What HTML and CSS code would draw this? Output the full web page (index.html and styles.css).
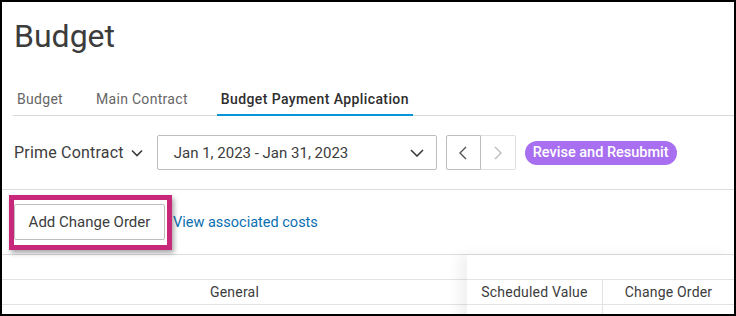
FILE: index.html
```html
<!DOCTYPE html>
<html lang="en">
<head>
    <meta charset="UTF-8">
    <title>Budget</title>
    <link rel="stylesheet" href="styles.css">
</head>
<body>
    <div class="frame">
        <h1 class="title">Budget</h1>

        <div class="tabs">
            <div class="tab">Budget</div>
            <div class="tab">Main Contract</div>
            <div class="tab active">Budget Payment Application</div>
        </div>

        <div class="toolbar">
            <div class="contract-select">
                Prime Contract
                <svg width="12" height="8" viewBox="0 0 12 8"><path d="M1 1.5l5 5 5-5" fill="none" stroke="#3c3c3c" stroke-width="1.6"/></svg>
            </div>
            <div class="period-select">
                <span>Jan 1, 2023 - Jan 31, 2023</span>
                <svg width="14" height="8" viewBox="0 0 14 8"><path d="M1 1l6 6 6-6" fill="none" stroke="#3c3c3c" stroke-width="1.6"/></svg>
            </div>
            <div class="pager">
                <button class="pager-btn">
                    <svg width="8" height="14" viewBox="0 0 8 14"><path d="M7 1L1 7l6 6" fill="none" stroke="#555" stroke-width="1.4"/></svg>
                </button>
                <button class="pager-btn disabled">
                    <svg width="8" height="14" viewBox="0 0 8 14"><path d="M1 1l6 6-6 6" fill="none" stroke="#bbb" stroke-width="1.4"/></svg>
                </button>
            </div>
            <span class="status-pill">Revise and Resubmit</span>
        </div>

        <div class="actions">
            <div class="highlight-wrap">
                <button class="btn-secondary">Add Change Order</button>
                <div class="highlight"></div>
            </div>
            <a class="link" href="#">View associated costs</a>
        </div>

        <div class="grid">
            <div class="grid-pinned">
                <div class="grid-row group-row"></div>
                <div class="grid-row head-row">
                    <div class="cell center">General</div>
                </div>
                <div class="grid-row"></div>
            </div>
            <div class="grid-scroll">
                <div class="grid-row group-row"></div>
                <div class="grid-row head-row">
                    <div class="cell col-sv">Scheduled Value</div>
                    <div class="cell col-co">Change Order</div>
                </div>
                <div class="grid-row">
                    <div class="cell col-sv"></div>
                    <div class="cell col-co"></div>
                </div>
            </div>
        </div>
    </div>
</body>
</html>
```

FILE: styles.css
```css
* {
    box-sizing: border-box;
}
body {
    margin: 0;
    font-family: Roboto, "Noto Sans", sans-serif;
    color: #3c3c3c;
    background: #000;
}
.frame {
    width: 736px;
    height: 316px;
    border: 2px solid #000;
    background: white;
    overflow: hidden;
}
.title {
    margin: 0;
    padding: 14px 0 0 12px;
    font-size: 32px;
    font-weight: 400;
    line-height: 40px;
    color: #3c3c3c;
}
.tabs {
    display: flex;
    gap: 25px;
    margin: 29px 0 0 11px;
    border-bottom: 1px solid #d9d9d9;
    height: 31px;
}
.tab {
    padding: 0 4px;
    font-size: 14px;
    line-height: 28px;
    letter-spacing: 0.3px;
    color: #666;
    border-bottom: 2px solid transparent;
    margin-bottom: -1px;
}
.tab.active {
    color: #2e2e2e;
    font-weight: 500;
    letter-spacing: 0.4px;
    border-bottom-color: #0696d7;
}
.toolbar {
    display: flex;
    align-items: center;
    height: 74px;
    padding: 0 0 0 12px;
    border-bottom: 1px solid #dcdcdc;
}
.contract-select {
    display: flex;
    align-items: center;
    gap: 7px;
    font-size: 16px;
    letter-spacing: 0.2px;
    color: #3c3c3c;
    margin-right: 14px;
}
.period-select {
    display: flex;
    align-items: center;
    justify-content: space-between;
    width: 280px;
    height: 35px;
    padding: 0 12px 0 16px;
    border: 1px solid #bdbdbd;
    border-radius: 2px;
    font-size: 15px;
    color: #3c3c3c;
    margin-right: 9px;
}
.pager {
    display: flex;
    height: 35px;
    margin-right: 9px;
}
.pager-btn {
    width: 35px;
    height: 35px;
    background: white;
    border: 1px solid #bdbdbd;
    border-radius: 2px 0 0 2px;
    display: flex;
    align-items: center;
    justify-content: center;
    padding: 0;
}
.pager-btn.disabled {
    border-color: #e0e0e0;
    border-left: none;
    border-radius: 0 2px 2px 0;
}
.status-pill {
    background: #a86ff0;
    color: white;
    font-size: 14.5px;
    font-weight: 500;
    line-height: 24px;
    padding: 0 8px;
    border-radius: 12px;
}
.actions {
    display: flex;
    align-items: center;
    height: 65px;
    padding: 0 0 0 12px;
    border-bottom: 1px solid #dcdcdc;
}
.highlight-wrap {
    position: relative;
}
.btn-secondary {
    height: 36px;
    width: 151px;
    background: white;
    border: 1px solid #bdbdbd;
    border-radius: 2px;
    font-family: inherit;
    font-size: 15px;
    color: #3c3c3c;
    padding: 0;
}
.highlight {
    position: absolute;
    left: -5px;
    top: -9px;
    width: 163px;
    height: 55px;
    border: 5px solid #c8287a;
    box-shadow: 2px 3px 5px rgba(0,0,0,0.35);
}
.link {
    margin-left: 8px;
    font-size: 14.5px;
    color: #0a6fb2;
    text-decoration: none;
}
.grid {
    display: flex;
}
.grid-pinned {
    width: 465px;
}
.grid-scroll {
    flex: 1;
    box-shadow: -8px 0 12px rgba(0,0,0,0.06);
    position: relative;
}
.grid-row {
    display: flex;
    height: 25px;
    border-bottom: 1px solid #e3e3e3;
}
.group-row {
    height: 25px;
}
.cell {
    font-size: 14px;
    line-height: 24px;
    letter-spacing: 0.2px;
    color: #3c3c3c;
}
.center {
    flex: 1;
    text-align: center;
}
.col-sv {
    width: 136px;
    text-align: center;
    border-right: 1px solid #e3e3e3;
}
.col-co {
    flex: 1;
    text-align: center;
}
```
